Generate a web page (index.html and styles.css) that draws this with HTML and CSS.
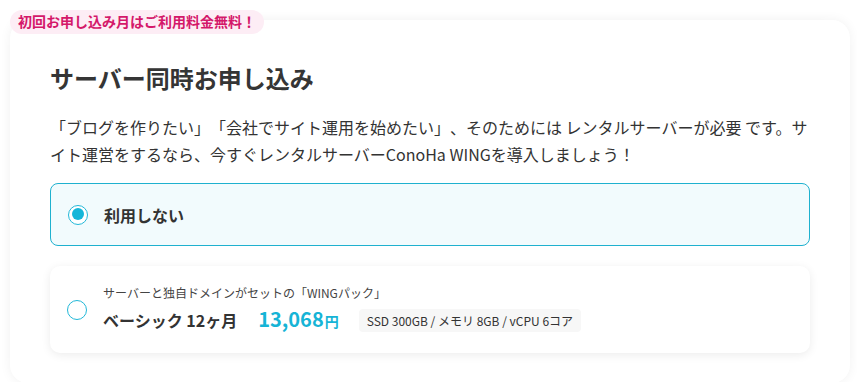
FILE: index.html
```html
<!DOCTYPE html>
<html lang="ja">
<head>
<meta charset="utf-8">
<link rel="stylesheet" href="styles.css">
</head>
<body>
<div class="page">
  <section class="card">
    <span class="badge">初回お申し込み月はご利用料金無料！</span>
    <h2 class="title">サーバー同時お申し込み</h2>
    <p class="lead">「ブログを作りたい」「会社でサイト運用を始めたい」、そのためには レンタルサーバーが必要 です。サイト運営をするなら、今すぐレンタルサーバーConoHa WINGを導入しましょう！</p>
    <label class="option option-selected">
      <span class="radio radio-on"></span>
      <span class="option-label">利用しない</span>
    </label>
    <label class="option option-plan">
      <span class="radio"></span>
      <span class="plan">
        <span class="plan-sub">サーバーと独自ドメインがセットの「WINGパック」</span>
        <span class="plan-main">
          <span class="plan-name">ベーシック 12ヶ月</span>
          <span class="price">13,068<span class="yen">円</span></span>
          <span class="spec">SSD 300GB / メモリ 8GB / vCPU 6コア</span>
        </span>
      </span>
    </label>
  </section>
</div>
</body>
</html>
```

FILE: styles.css
```css
* { box-sizing: border-box; }
html, body {
  margin: 0;
  padding: 0;
  background: #ffffff;
}
body {
  font-family: "Noto Sans CJK JP", "Noto Sans", sans-serif;
  color: #333333;
  text-spacing-trim: space-all;
}
.page {
  padding: 20px 7px 0 10px;
}
.card {
  position: relative;
  background: #ffffff;
  border-radius: 18px;
  box-shadow: 0 0 12px rgba(0, 0, 0, 0.06);
  padding: 40px 40px 30px 40px;
}
.badge {
  position: absolute;
  left: 0;
  top: -10px;
  height: 24px;
  line-height: 23px;
  padding: 0 8px;
  border-radius: 12px;
  background: #fdedf5;
  color: #d4186a;
  font-size: 14px;
  font-weight: 700;
  white-space: nowrap;
}
.title {
  margin: 0 0 18px 0;
  font-size: 24px;
  line-height: 36px;
  font-weight: 700;
  color: #353535;
}
.lead {
  margin: 0 0 15px 0;
  font-size: 16px;
  line-height: 27px;
  color: #333333;
}
.option {
  display: flex;
  align-items: center;
  gap: 16px;
  border-radius: 8px;
  padding: 0 16px 0 17px;
}
.option-selected {
  height: 63px;
  border: 1px solid #1fb1cf;
  background: #f2fbfd;
  margin-bottom: 20px;
}
.option-plan {
  height: 87px;
  background: #ffffff;
  border-radius: 10px;
  box-shadow: 0 2px 10px rgba(0, 0, 0, 0.08);
}
.radio {
  flex: none;
  width: 20px;
  height: 20px;
  border-radius: 50%;
  border: 1.5px solid #22b8d8;
  background: #ffffff;
  position: relative;
}
.radio-on::after {
  content: "";
  position: absolute;
  left: 2.5px;
  top: 2.5px;
  width: 12px;
  height: 12px;
  border-radius: 50%;
  background: #14b6d9;
}
.option-label {
  font-size: 16px;
  font-weight: 700;
  color: #333333;
}
.plan {
  display: flex;
  flex-direction: column;
  gap: 2px;
  padding-top: 1px;
}
.plan-sub {
  font-size: 12px;
  line-height: 18px;
  color: #444444;
}
.plan-main {
  display: flex;
  align-items: center;
}
.plan-name {
  font-size: 16px;
  font-weight: 700;
  color: #333333;
  margin-right: 21px;
}
.price {
  font-size: 20px;
  line-height: 30px;
  font-weight: 700;
  color: #16b4d6;
  margin-right: 20px;
}
.yen {
  font-size: 14px;
  margin-left: 1px;
}
.spec {
  background: #f7f7f7;
  border-radius: 4px;
  padding: 0 8px;
  font-size: 12px;
  line-height: 23px;
  color: #333333;
}
```
